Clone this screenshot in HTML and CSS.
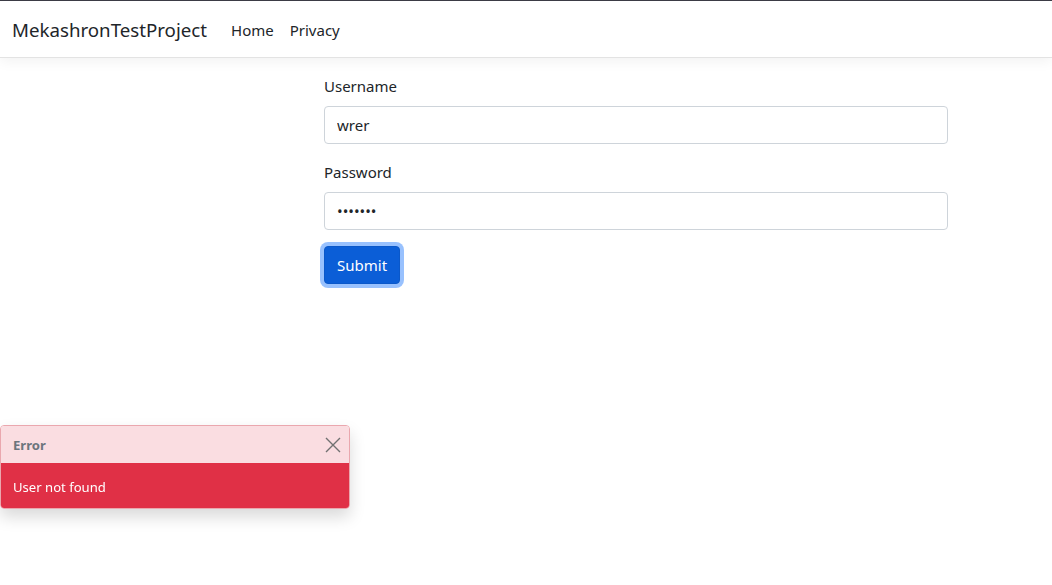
FILE: index.html
```html
<!DOCTYPE html>
<html lang="en">
<head>
<meta charset="utf-8">
<title>MekashronTestProject</title>
<link rel="stylesheet" href="styles.css">
</head>
<body>
<header class="navbar">
  <a class="brand" href="#">MekashronTestProject</a>
  <nav class="nav">
    <a class="nav-link" href="#">Home</a>
    <a class="nav-link" href="#">Privacy</a>
  </nav>
</header>
<main class="main">
  <form class="login-form">
    <div class="field">
      <label class="form-label" for="username">Username</label>
      <input class="form-control" id="username" type="text" value="wrer">
    </div>
    <div class="field">
      <label class="form-label" for="password">Password</label>
      <input class="form-control" id="password" type="password" value="1234567">
    </div>
    <button class="btn-primary" type="button">Submit</button>
  </form>
</main>
<div class="toast">
  <div class="toast-header">
    <strong class="toast-title">Error</strong>
    <button class="btn-close" type="button" aria-label="Close">
      <svg width="16" height="16" viewBox="0 0 16 16"><path d="M1 1 L15 15 M15 1 L1 15" stroke="#717171" stroke-width="1.4" fill="none"/></svg>
    </button>
  </div>
  <div class="toast-body">User not found</div>
</div>
</body>
</html>
```
FILE: styles.css
```css
* { box-sizing: border-box; }
html, body { margin: 0; padding: 0; }
body {
  font-family: "Noto Sans", "Open Sans", sans-serif;
  font-size: 15px;
  line-height: 24px;
  color: #212529;
  background: #fff;
  border-top: 1px solid #3b3b45;
  min-height: 585px;
}
.navbar {
  display: flex;
  align-items: center;
  height: 57px;
  padding: 9px 12px 7px;
  background: #fff;
  border-bottom: 1px solid #e3e3e3;
  box-shadow: 0 4px 12px rgba(0,0,0,0.05);
}
.brand {
  font-size: 18.7px;
  line-height: 30px;
  color: #212529;
  text-decoration: none;
  margin-right: 16px;
}
.nav { display: flex; }
.nav-link {
  color: #212529;
  text-decoration: none;
  padding: 8px;
  line-height: 24px;
}
.main {
  padding: 16px 0 0 324px;
}
.login-form {
  width: 624px;
}
.field { margin-bottom: 16px; }
.form-label {
  display: block;
  margin-bottom: 8px;
  line-height: 24px;
}
.form-control {
  display: block;
  width: 100%;
  height: 38px;
  padding: 6px 12px;
  font: inherit;
  color: #212529;
  border: 1px solid #ced4da;
  border-radius: 4px;
  background: #fff;
}
.btn-primary {
  font: inherit;
  color: #fff;
  background: #0b5ed7;
  border: 1px solid #0a58ca;
  border-radius: 4px;
  height: 38px;
  padding: 6px 12px;
  box-shadow: 0 0 0 4px rgba(49,132,253,0.5);
}
.toast {
  position: fixed;
  left: 0;
  top: 425px;
  width: 350px;
  border: 1px solid #eaa7ae;
  border-radius: 4px;
  overflow: hidden;
  box-shadow: 0 8px 16px rgba(0,0,0,0.15);
  font-size: 13.1px;
}
.toast-header {
  display: flex;
  align-items: center;
  justify-content: space-between;
  height: 37px;
  padding: 1px 8px 0 12px;
  background: #fadde1;
  color: #6c757d;
}
.toast-title { font-weight: 700; }
.btn-close {
  width: 16px;
  height: 16px;
  padding: 0;
  border: 0;
  background: transparent;
  display: flex;
  align-items: center;
  justify-content: center;
}
.toast-body {
  background: #e03046;
  color: #fff;
  padding: 14px 12px 10px;
  line-height: 21px;
}
```
